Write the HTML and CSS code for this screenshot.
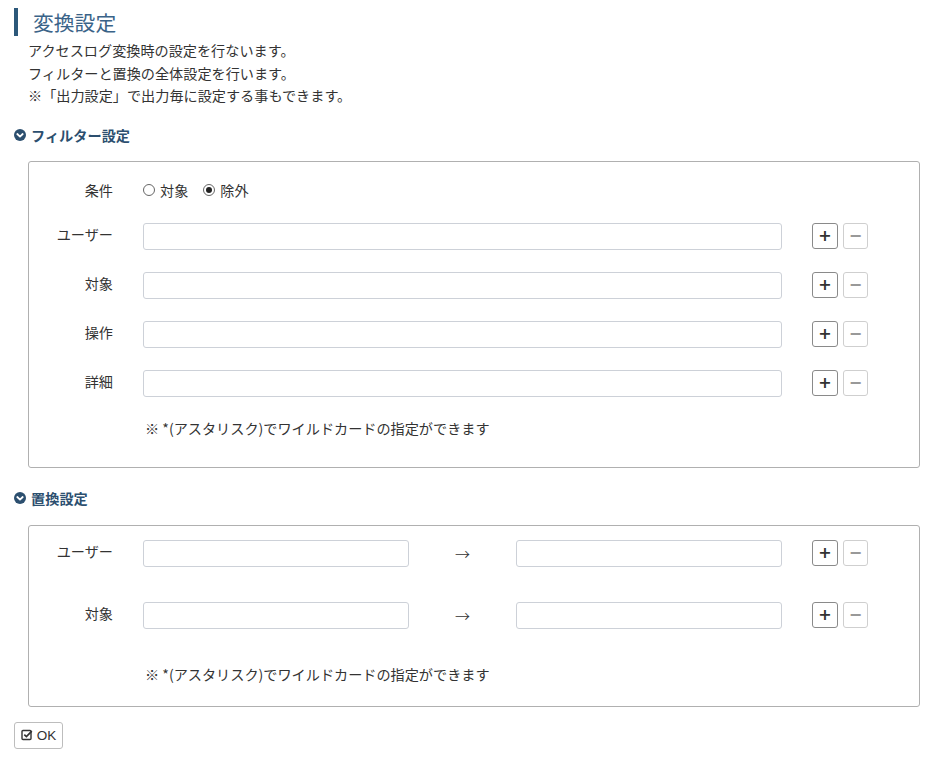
FILE: index.html
```html
<!DOCTYPE html>
<html lang="ja">
<head>
<meta charset="utf-8">
<link rel="stylesheet" href="styles.css">
</head>
<body>
<div class="page">
  <h1 class="title">変換設定</h1>
  <div class="desc">
    <p>アクセスログ変換時の設定を行ないます。</p>
    <p>フィルターと置換の全体設定を行います。</p>
    <p>※「出力設定」で出力毎に設定する事もできます。</p>
  </div>

  <h2 class="sec">
    <svg class="chev" viewBox="0 0 12 12" width="12" height="12"><circle cx="6" cy="6" r="6" fill="#2c4f6f"/><path d="M3.3 5 L6 7.6 L8.7 5" fill="none" stroke="#fff" stroke-width="1.8" stroke-linecap="round" stroke-linejoin="round"/></svg>
    フィルター設定
  </h2>
  <div class="box box1">
    <div class="row cond">
      <div class="lbl">条件</div>
      <div class="radios">
        <label class="radio"><span class="rc"></span>対象</label>
        <label class="radio"><span class="rc on"></span>除外</label>
      </div>
    </div>
    <div class="row">
      <div class="lbl">ユーザー</div>
      <div class="inp wide"></div>
      <div class="btns"><span class="pm plus">+</span><span class="pm minus">−</span></div>
    </div>
    <div class="row">
      <div class="lbl">対象</div>
      <div class="inp wide"></div>
      <div class="btns"><span class="pm plus">+</span><span class="pm minus">−</span></div>
    </div>
    <div class="row">
      <div class="lbl">操作</div>
      <div class="inp wide"></div>
      <div class="btns"><span class="pm plus">+</span><span class="pm minus">−</span></div>
    </div>
    <div class="row">
      <div class="lbl">詳細</div>
      <div class="inp wide"></div>
      <div class="btns"><span class="pm plus">+</span><span class="pm minus">−</span></div>
    </div>
    <div class="note">※ *(アスタリスク)でワイルドカードの指定ができます</div>
  </div>

  <h2 class="sec sec2">
    <svg class="chev" viewBox="0 0 12 12" width="12" height="12"><circle cx="6" cy="6" r="6" fill="#2c4f6f"/><path d="M3.3 5 L6 7.6 L8.7 5" fill="none" stroke="#fff" stroke-width="1.8" stroke-linecap="round" stroke-linejoin="round"/></svg>
    置換設定
  </h2>
  <div class="box box2">
    <div class="row rep">
      <div class="lbl">ユーザー</div>
      <div class="pair"><div class="inp half"></div><span class="arrow">→</span><div class="inp half"></div></div>
      <div class="btns"><span class="pm plus">+</span><span class="pm minus">−</span></div>
    </div>
    <div class="row rep">
      <div class="lbl">対象</div>
      <div class="pair"><div class="inp half"></div><span class="arrow">→</span><div class="inp half"></div></div>
      <div class="btns"><span class="pm plus">+</span><span class="pm minus">−</span></div>
    </div>
    <div class="note">※ *(アスタリスク)でワイルドカードの指定ができます</div>
  </div>

  <button class="ok">
    <svg viewBox="0 0 12 12" width="12" height="12"><rect x="1" y="1.5" width="9" height="9" rx="1" fill="none" stroke="#333" stroke-width="1.4"/><path d="M3.3 5.6 L5.4 7.6 L10.8 2.2" fill="none" stroke="#333" stroke-width="1.7"/></svg>
    OK
  </button>
</div>
</body>
</html>
```

FILE: styles.css
```css
* { box-sizing: border-box; }
html, body { margin: 0; padding: 0; background: #fff; }
body {
  font-family: "Noto Sans CJK JP", "Noto Sans", sans-serif;
  color: #333;
  font-size: 14.15px;
}
.page { padding: 8px 23px 0 14px; width: 943px; }

.title {
  margin: 0;
  font-weight: normal;
  font-size: 20.8px;
  line-height: 28px;
  color: #3a6388;
  border-left: 4px solid #2c587a;
  padding-left: 15px;
  height: 28px;
}
.desc { margin: 3px 0 0 14px; }
.desc p { margin: 0; line-height: 22.5px; }

.sec {
  margin: 18px 0 0 0;
  font-size: 14.2px;
  font-weight: bold;
  color: #2c4f6f;
  line-height: 20px;
  display: flex;
  align-items: center;
  gap: 5px;
}
.sec2 { margin-top: 20px; }
.chev { display: block; }

.box {
  margin: 16px 0 0 14px;
  border: 1px solid #b0b0b0;
  border-radius: 3px;
  width: 892px;
}
.box1 { height: 307px; padding-top: 17px; }
.box2 { height: 182px; padding-top: 14px; margin-top: 17px; }

.row {
  display: flex;
  align-items: center;
  height: 27px;
  margin-bottom: 22px;
}
.row.cond { height: 22px; margin-bottom: 22px; position: relative; top: 1px; }
.row.rep { margin-bottom: 35px; }
.lbl {
  width: 84px;
  text-align: right;
  margin-right: 30px;
  line-height: 20px;
  position: relative;
  top: -2px;
}
.cond .lbl { top: -1px; }
.radios { display: flex; gap: 15px; }
.radio { display: flex; align-items: center; gap: 5px; line-height: 20px; position: relative; top: -1px; }
.rc {
  width: 12px; height: 12px;
  border: 1px solid #666;
  border-radius: 50%;
  display: inline-block;
  position: relative;
  background: #fff;
}
.rc.on::after {
  content: "";
  position: absolute;
  left: 2px; top: 2px;
  width: 6px; height: 6px;
  border-radius: 50%;
  background: #222;
}
.inp {
  height: 27px;
  border: 1px solid #cdd1d8;
  border-radius: 3px;
  background: #fff;
}
.inp.wide { width: 639px; }
.pair { display: flex; align-items: center; width: 639px; }
.inp.half { width: 266px; }
.arrow {
  width: 107px;
  text-align: center;
  font-size: 15px;
  color: #333;
  font-family: "Noto Sans CJK JP", sans-serif;
  font-weight: 300;
}
.btns { display: flex; gap: 5px; margin-left: 30px; }
.pm {
  width: 26px; height: 26px;
  border-radius: 3px;
  display: flex;
  align-items: center;
  justify-content: center;
  font-family: "DejaVu Sans", sans-serif;
  font-weight: bold;
  font-size: 16px;
  line-height: 1;
}
.pm.plus { border: 1px solid #8a8a8a; color: #333; }
.pm.minus { border: 1px solid #cfcfcf; color: #999; width: 25px; }
.note { margin: 0 0 0 116px; line-height: 20px; }
.box1 .note { margin-top: -1px; }
.box2 .note { margin-top: 0px; }

.ok {
  margin-top: 15px;
  width: 49px; height: 27px;
  border: 1px solid #bdbdbd;
  border-radius: 3px;
  background: #fff;
  font-family: "Liberation Sans", Arial, sans-serif;
  font-size: 13.5px;
  color: #333;
  display: flex;
  align-items: center;
  justify-content: center;
  gap: 4px;
  padding: 0;
}
.ok svg { display: block; }
```
